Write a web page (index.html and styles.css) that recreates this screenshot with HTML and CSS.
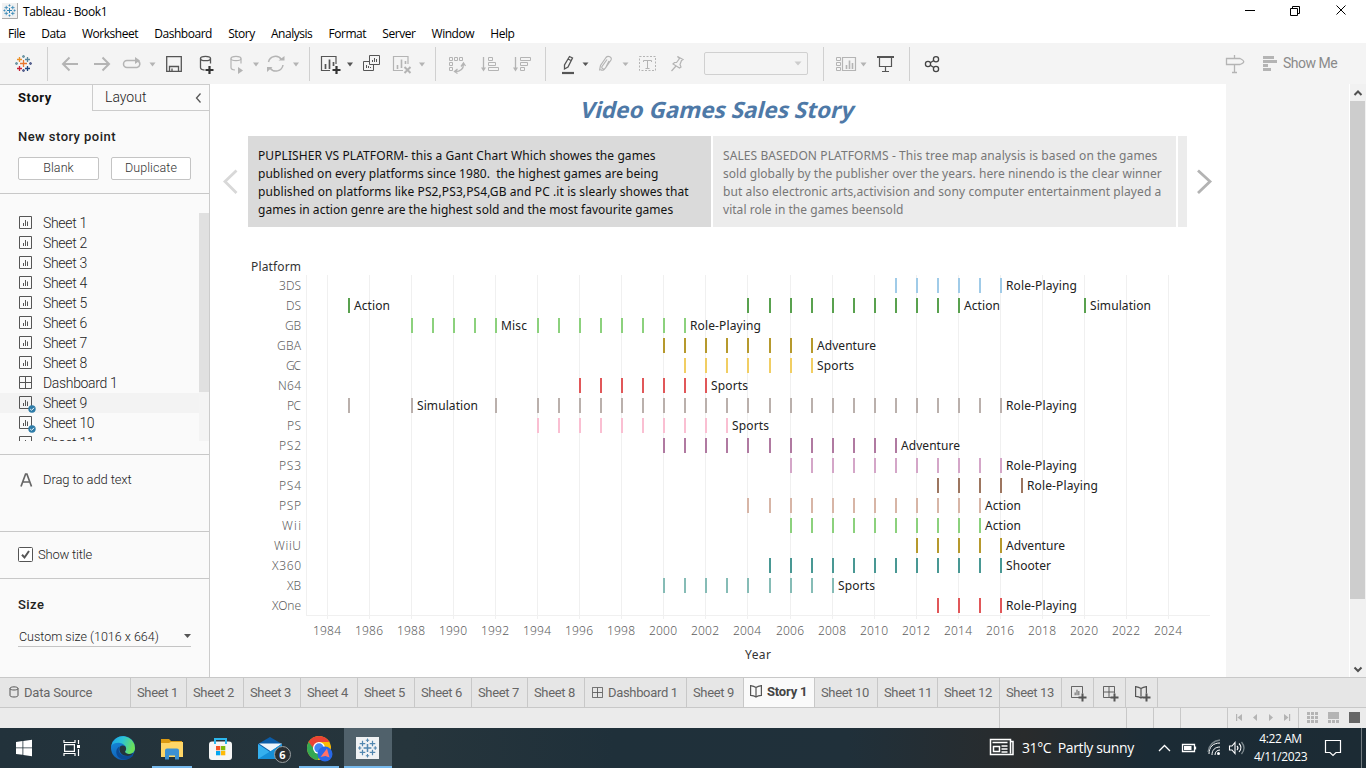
FILE: index.html
```html
<!DOCTYPE html>
<html lang="en">
<head>
<meta charset="utf-8">
<title>Tableau - Book1</title>
<link rel="stylesheet" href="styles.css">
</head>
<body>
<svg class="defs" width="0" height="0">
  <defs>
    <symbol id="sheet" viewBox="0 0 13 13"><path d="M.5.5h12v12H.5zM4.5 7v3M6.5 4v6M8.5 5.500v4.500" fill="none" stroke="#555"/></symbol>
    <symbol id="grid" viewBox="0 0 13 13"><path d="M.5.5h12v12H.5zM6.500 1v11M1 6.500h11" fill="none" stroke="#555"/></symbol>
    <symbol id="book" viewBox="0 0 12 13"><path d="M6 2.500C4.500 1.500 3 1 .600.6v9.800c2.400.2 4 .7 5.400 1.700 1.400-1 3-1.500 5.400-1.700V.6C9 1 7.500 1.500 6 2.500zM6 2.500v9" fill="none" stroke="#555" stroke-width="1.200"/></symbol>
    <symbol id="logo" viewBox="0 0 18 18"><path d="M9 5.500v7M5.500 9h7" stroke-width="1.400"/><path d="M4.500 2.500v5M2 5h5M13.500 2.500v5M11 5h5M4.500 10.500v5M2 13h5M13.500 10.500v5M11 13h5" stroke-width="1.100"/><path d="M9 .5v3M7.500 2h3M9 14.500v3M7.500 16h3M2 7.500v3M.5 9h3M16 7.500v3M14.500 9h3"/></symbol>
    <symbol id="ok" viewBox="0 0 8 8"><circle cx="4" cy="4" r="3.700" fill="#2e7ca8"/><path d="M2.200 4l1.300 1.300L6 2.800" fill="none" stroke="#fff"/></symbol>
  </defs>
</svg>
<div class="window">
  <header class="titlebar">
    <svg class="app-icon" width="16" height="16" viewBox="0 0 16 16"><path fill="#f1f1f1" d="M0 0h16v16H0z"/><path d="M15.500 0v15.500H0" fill="none" stroke="#aaa"/><use href="#logo" x="1" y="1" width="13" height="13" stroke="#2e83b4"/></svg>
    <span class="title">Tableau - Book1</span>
    <svg class="controls" width="130" height="22" viewBox="1236 0 130 22" fill="none" stroke="#000"><path d="M1245 10.500h10M1290.500 8.500h7v7h-7zM1292.500 8V6.500h7v7H1298M1336.500 5.500l9 9M1345.500 5.500l-9 9"/></svg>
  </header>
  <nav class="menu"><span>File</span><span>Data</span><span>Worksheet</span><span>Dashboard</span><span>Story</span><span>Analysis</span><span>Format</span><span>Server</span><span>Window</span><span>Help</span></nav>

  <div class="toolbar">
    <svg width="47" height="41" viewBox="0 43 47 41"><g stroke-width="1.300"><path stroke="#e8762d" d="M23.500 60v7M20 63.500h7"/><path stroke="#eb9129" d="M19.500 57v5M17 59.500h5"/><path stroke="#59879b" d="M27.500 57v5M25 59.500h5"/><path stroke="#c72035" d="M19.500 66v5M17 68.500h5"/><path stroke="#1f457e" d="M27.500 66v5M25 68.500h5"/><path stroke="#7199a6" d="M23.500 55v3M22 56.500h3M15 63.500h3M16.500 62v3"/><path stroke="#5c6692" d="M23.500 69v3M22 70.500h3M29 63.500h3M30.500 62v3"/></g></svg>
    <i class="rule"></i>
    <svg width="261" height="41" viewBox="48 43 261 41" fill="none" stroke="#b4b4b4">
      <path stroke-width="2" d="M63 64h15M69.500 57.500L63 64l6.500 6.500M94 64h15M102.500 57.500L109 64l-6.500 6.500"/>
      <path stroke-width="1.500" d="M132 60.500h-5a3.500 3.500 0 0 0 0 7h10a3.500 3.500 0 0 0 1-6.500M129 60.500h7"/><path fill="#b4b4b4" stroke="none" d="M135 57l5 3.500-5 3.500zM149.500 62.500h6l-3 4zM253 62.500h6l-3 4zM293 62.500h6l-3 4z"/>
      <g stroke="#555" stroke-width="1.300"><path d="M166.700 56.700h14.600v14.600h-14.600zM169.500 71v-4.500h9V71M172 71v-2.500"/><ellipse cx="205.500" cy="58.500" rx="5" ry="2.200"/><path d="M200.500 58.500v9c0 1.500 1.500 2.300 4 2.500M210.500 58.500v5"/><path d="M209.500 66v8M205.500 70h8" stroke-width="2.200" stroke="#333"/></g>
      <g stroke-width="1.200"><ellipse cx="236" cy="58.500" rx="5" ry="2.200"/><path d="M231 58.500v9c0 1.500 1.500 2.300 4 2.500M241 58.500v5"/><path d="M238 67l5 3.500-5 3.500z" fill="#b4b4b4" stroke="none"/></g>
      <path stroke-width="1.500" d="M268.500 62a7.200 7.200 0 0 1 13-2.500M283 65a7.200 7.200 0 0 1-13 3"/><path fill="#b4b4b4" stroke="none" d="M278.500 60.500h6V56zM267 72v-5h5.500z"/>
    </svg>
    <i class="rule"></i>
    <svg width="125" height="41" viewBox="310 43 125 41" fill="none" stroke="#555">
      <path stroke-width="1.200" d="M330 70.500h-8.500v-14h14.500V64"/><path d="M325.500 64v5M329.500 59.500V69M333.500 62v4" stroke-width="1.700"/><path d="M336.500 66v8M332.500 70h8" stroke-width="2.200" stroke="#333"/><path d="M347 62.500h6l-3 4z" fill="#555" stroke="none"/>
      <path d="M369.500 55.500h10v9h-10zM369 61.500h-5.500v9h10V65M372.500 60v2M374.500 58v4M376.500 59v3M366.500 65v3M368.500 66v2M370.500 67v1"/>
      <g stroke="#b4b4b4"><path d="M403 70.500h-9.500v-14H408V64" stroke-width="1.200"/><path d="M397.500 65v4M401.500 59.500V68M405.500 61v3" stroke-width="1.600"/><path d="M404.500 67l6 6M410.500 67l-6 6" stroke-width="2"/><path d="M419 62.500h6l-3 4z" fill="#b4b4b4" stroke="none"/></g>
    </svg>
    <i class="rule"></i>
    <svg width="109" height="41" viewBox="436 43 109 41" fill="none" stroke="#b4b4b4">
      <path d="M449.500 57.500h3v3h-3zM454.500 57.500h3v3h-3zM459.500 57.500h3v3h-3zM449.500 62.500h3v3h-3zM449.500 67.500h3v3h-3z"/><path d="M455 71.500c5.500 0 8.500-2 8.500-7.500M457.500 69l-3 2.500 3 2M461 66.500l2.500-3.500 2 3" stroke-width="1.300"/>
      <path d="M483.500 57v11.500M515.500 57v11.500" stroke-width="1.300"/><path d="M481 67.500h5l-2.500 4zM513 67.500h5l-2.500 4z" fill="#b4b4b4" stroke="none"/><path d="M488.500 57.500h4v3h-4zM488.500 62.500h7v3h-7zM488.500 67.500h10v3h-10zM520.500 57.500h10v3h-10zM520.500 62.500h7v3h-7zM520.500 67.500h4v3h-4z"/>
    </svg>
    <i class="rule"></i>
    <svg width="158" height="41" viewBox="546 43 158 41" fill="none" stroke="#b4b4b4">
      <g stroke="#555"><path d="M569.500 56.500l3 1.500-4.500 9-3.500 2v-4zM568 59l3 1.500" stroke-width="1.300"/><path d="M562 73h12" stroke-width="2.200"/></g><path d="M582.500 62.500h6l-3 3.500z" fill="#555" stroke="none"/>
      <path stroke-width="1.200" d="M599.500 70.500l1-5 5.500-8c2-2.300 6.500-.5 5 2.500l-5.500 8c-1.500 2-4.500.5-3.500-1.500l5-7M600.500 69.500c2 1.500 3.500.5 4.500-1l5-7M606 67l3-6"/><path d="M622.500 62.500h6l-3 3.500z" fill="#b4b4b4" stroke="none"/>
      <path d="M639.500 56.500h16v14h-16z" stroke-dasharray="2 1.500"/><path d="M643.500 62v-1.500h8V62M647.500 60.500v7.500M645.500 68.500h4"/>
      <path stroke-width="1.200" d="M677.500 56.500l5.500 3-1.500 1-1.500 4 1 2.500-1.500 1-6.500-4 1.500-1.500h2l3-4zM676 66l-4.500 5"/>
    </svg>
    <div class="combo"><svg width="8" height="5"><path d="M.5.5h7L4 4.500z" fill="#ccc"/></svg></div>
    <i class="rule gap-left"></i>
    <svg width="85" height="41" viewBox="824 43 85 41" fill="none" stroke="#b4b4b4">
      <path d="M836.500 57.500h4v3h-4zM836.500 62.500h4v3h-4zM836.500 67.500h4v3h-4z"/><path d="M842.500 57.500h13v13h-13z" stroke-width="1.200"/><path d="M846.500 65v4M849.500 60.500V69M852.500 63v6" stroke-width="1.600"/><path d="M860.500 62.500h6l-3 4z" fill="#b4b4b4" stroke="none"/>
      <g stroke="#555"><path d="M877 57h17" stroke-width="2"/><path d="M879.500 57v9.500h12V57M885.500 67v4M882 71.500h7" stroke-width="1.200"/></g>
    </svg>
    <i class="rule"></i>
    <svg width="40" height="41" viewBox="910 43 40 41" fill="none" stroke="#444" stroke-width="1.300"><circle cx="928" cy="64" r="2.600"/><circle cx="936" cy="59.200" r="2.600"/><circle cx="936" cy="69" r="2.600"/><path d="M930.300 62.700l3.500-2.200M930.300 65.300l3.500 2.200"/></svg>
    <svg class="push" width="59" height="41" viewBox="1221 43 59 41" fill="none" stroke="#b4b4b4" stroke-width="1.300"><path d="M1226.500 58.500h13.500c5 2.500 5 4 0 6h-13.500zM1234.500 55v3.500M1234.500 65v7M1232 72.500h5"/><path d="M1263 57.500h11M1263 61.500h14M1263 65.500h5M1263 69.500h8" stroke-width="3"/></svg>
    <span class="show-me">Show Me</span>
  </div>

  <main class="work">
    <aside class="side">
      <div class="side-tabs"><b>Story</b><div class="layout-tab"><span>Layout</span><svg width="7" height="10" viewBox="0 0 7 10"><path d="M5.500.5L1.500 5l4 4.500" fill="none" stroke="#555" stroke-width="1.300"/></svg></div></div>
      <section class="new-point"><h2>New story point</h2><div class="buttons"><button>Blank</button><button>Duplicate</button></div></section>
      <section class="sheets">
        <ul class="list">
          <li><svg><use href="#sheet"/></svg>Sheet 1</li><li><svg><use href="#sheet"/></svg>Sheet 2</li><li><svg><use href="#sheet"/></svg>Sheet 3</li><li><svg><use href="#sheet"/></svg>Sheet 4</li><li><svg><use href="#sheet"/></svg>Sheet 5</li><li><svg><use href="#sheet"/></svg>Sheet 6</li><li><svg><use href="#sheet"/></svg>Sheet 7</li><li><svg><use href="#sheet"/></svg>Sheet 8</li><li><svg><use href="#grid"/></svg>Dashboard 1</li>
          <li class="hover"><svg><use href="#sheet"/></svg><svg class="badge"><use href="#ok"/></svg>Sheet 9</li><li><svg><use href="#sheet"/></svg><svg class="badge"><use href="#ok"/></svg>Sheet 10</li><li><svg><use href="#sheet"/></svg>Sheet 11</li>
        </ul>
        <div class="list-scroll"><i></i></div>
      </section>
      <section class="drag"><svg width="13" height="14" viewBox="0 0 13 14"><path d="M1 13.500L5.600 1h1.300l4.600 12.500M3 9h6.500" fill="none" stroke="#666" stroke-width="1.700"/></svg><span>Drag to add text</span></section>
      <section class="show-title"><svg width="15" height="15" viewBox="0 0 15 15"><rect x=".5" y=".5" width="14" height="14" rx="1" fill="#fff" stroke="#555"/><path d="M4 7.800l2.500 2.700L11 4" fill="none" stroke="#555" stroke-width="2"/></svg><span>Show title</span></section>
      <section class="size"><h2>Size</h2><div class="select"><span>Custom size (1016 x 664)</span><svg width="7" height="4"><path d="M0 0h7L3.500 4z" fill="#555"/></svg></div></section>
    </aside>

    <article class="story">
      <h1>Video Games Sales Story</h1>
      <div class="navigator">
        <svg class="prev" width="38" height="91" viewBox="0 0 38 91"><path d="M26.500 34.500L15 45.500 26.500 57" fill="none" stroke="#d8d8d8" stroke-width="2.800"/></svg>
        <p class="point active"><span class="wide">PUPLISHER VS PLATFORM- this a Gant Chart Which showes the games</span>
<span>published on every platforms since 1980.  the highest games are being</span>
<span class="wide">published on platforms like PS2,PS3,PS4,GB and PC .it is slearly showes that</span>
<span>games in action genre are the highest sold and the most favourite games</span></p>
        <p class="point"><span class="wide">SALES BASEDON PLATFORMS - This tree map analysis is based on the games</span>
<span>sold globally by the publisher over the years. here ninendo is the clear winner</span>
<span class="wide">but also electronic arts,activision and sony computer entertainment played a</span>
<span>vital role in the games beensold</span></p>
        <p class="point sliver"></p>
        <svg class="next" width="39" height="91" viewBox="0 0 39 91"><path d="M11 34.500L23 45.500 11 57" fill="none" stroke="#b3b3b3" stroke-width="2.800"/></svg>
      </div>
      <svg class="chart" id="chart" width="1016" height="425" viewBox="210 252 1016 425"></svg>
    </article>
    <div class="empty"></div>
    <div class="scrollbar"><svg width="16" height="17" viewBox="0 0 16 17"><path d="M4.500 11L8 7.500l3.500 3.500" fill="none" stroke="#505050" stroke-width="2"/></svg><i></i><svg width="16" height="17" viewBox="0 0 16 17"><path d="M4.500 7.500L8 11l3.500-3.500" fill="none" stroke="#505050" stroke-width="2"/></svg></div>
  </main>

  <div class="sheet-tabs">
    <div class="source"><svg width="10" height="12" viewBox="0 0 10 12"><path d="M1 2.500C1 .3 9 .3 9 2.500v7c0 2-8 2-8 0zc0 2 8 2 8 0" fill="none" stroke="#555"/></svg>Data Source</div>
    <div>Sheet 1</div><div>Sheet 2</div><div>Sheet 3</div><div>Sheet 4</div><div>Sheet 5</div><div>Sheet 6</div><div>Sheet 7</div><div>Sheet 8</div>
    <div class="dash"><svg width="11" height="11"><use href="#grid"/></svg>Dashboard 1</div><div>Sheet 9</div>
    <div class="current"><svg width="12" height="13"><use href="#book"/></svg>Story 1</div>
    <div>Sheet 10</div><div>Sheet 11</div><div>Sheet 12</div><div>Sheet 13</div>
    <div class="add"><svg width="16" height="16"><use href="#sheet" width="12" height="12"/><path d="M8 11.500h8M11.500 7.500v8" stroke="#e6e6e6" stroke-width="4"/><path d="M7.500 11.500h8M11.500 7.500v8" stroke="#555" stroke-width="2"/></svg></div>
    <div class="add"><svg width="16" height="16"><use href="#grid" width="12" height="12"/><path d="M8 11.500h8M11.500 7.500v8" stroke="#e6e6e6" stroke-width="4"/><path d="M7.500 11.500h8M11.500 7.500v8" stroke="#555" stroke-width="2"/></svg></div>
    <div class="add"><svg width="16" height="16"><use href="#book" width="12" height="13"/><path d="M8 11.500h8M11.500 7.500v8" stroke="#e6e6e6" stroke-width="4"/><path d="M7.500 11.500h8M11.500 7.500v8" stroke="#555" stroke-width="2"/></svg></div>
    <div></div>
  </div>
  <div class="status"><i></i><i></i><i></i><i></i><i></i>
    <div><svg width="71" height="20" viewBox="1228 708 71 20" fill="#b4b4b4"><path d="M1236 714h1.200v7H1236zM1242 714v7l-4.500-3.500zM1257 714v7l-4-3.500zM1269 714v7l4-3.500zM1284 714v7l4.500-3.500zM1289 714h1.200v7H1289z"/></svg></div>
    <div><svg width="67" height="20" viewBox="1299 708 67 20" fill="#b4b4b4"><path d="M1307 712h3v3h-3zm4 0h3v3h-3zm4 0h3v3h-3zM1307 716h3v3h-3zm4 0h3v3h-3zm4 0h3v3h-3zM1307 720h3v3h-3zm4 0h3v3h-3zm4 0h3v3h-3zM1328 712h11v7h-11zM1328 720h3v3h-3zm4 0h3v3h-3zm4 0h3v3h-3z"/><path fill="#666" d="M1349 712h11v11h-11z"/></svg></div>
  </div>

  <footer class="taskbar">
    <svg width="48" height="40" viewBox="0 728 48 40" fill="#fff"><path d="M16 742l6.500-.9v6.400H16zM23.300 741l8.700-1.200v7.700h-8.700zM16 748.300h6.500v6.500L16 754zM23.300 748.300H32v7.900l-8.700-1.200z"/></svg>
    <svg width="51" height="40" viewBox="48 728 51 40" fill="none" stroke="#fff" stroke-width="1.200"><path d="M64 740v2.500h11V740M64.600 744.600h9.800v6.800h-9.800zM64 756v-2.500h11v2.500M78.500 740v4M78.500 749v7"/><path fill="#fff" stroke="none" d="M77 745h3v3h-3z"/></svg>
    <svg width="53" height="40" viewBox="99 728 53 40"><defs><linearGradient id="e1" x1="0" y1="0" x2="1" y2=".3"><stop stop-color="#1aa4ea"/><stop offset=".5" stop-color="#2cc3d5"/><stop offset="1" stop-color="#6be05a"/></linearGradient><linearGradient id="e2" x1="0" y1="0" x2=".5" y2="1"><stop stop-color="#1793e0"/><stop offset="1" stop-color="#0f5cb5"/></linearGradient></defs><circle cx="123" cy="748" r="12" fill="url(#e2)"/><path fill="url(#e1)" d="M111.200 746a12 12 0 0 1 23.800 2c0 5-4.500 7-8.500 5.500-2-.8-1.800-1.800-.7-3 1-1.500.5-6.500-5.800-7.500-4-.6-7 .8-8.800 3z"/><path fill="#0c4a94" d="M119.500 746.500c-3 6 3 12 12.500 8.500 1.200-.4 1.500.2.800 1-6 6.500-17 3.500-16.500-4.500.1-2 1.200-4 3.200-5z"/><path fill="#24343c" d="M119.800 747c1.500-2.500 6.500-2 6.300 2-.1 1.500-1.800 2.200-.5 3.800 1.700 1.800 5.500 1.400 8 .2-2 3-6 3.500-9 2.500-4-1-6-5-4.800-8.500z"/></svg>
    <div class="app open"><svg width="40" height="40" viewBox="152 728 40 40"><path d="M161 739h8l2 2h11v6h-21z" fill="#dc9a12"/><path d="M161 743h8l2-1h12v15h-22z" fill="#ffd667"/><path d="M165 750.500q0-2 2-2h10q2 0 2 2v9h-4v-4h-6v4h-4z" fill="#3c91d4"/></svg></div>
    <svg width="56" height="40" viewBox="192 728 56 40"><path d="M215 744v-5h11v5" fill="none" stroke="#2db8ee" stroke-width="2"/><rect x="209" y="741.500" width="23" height="18.500" rx="3" fill="#f6f6f6"/><path d="M215 741v3M226 741v3" stroke="#2db8ee" stroke-width="2"/><path fill="#f35325" d="M216 746h4.300v4.300H216z"/><path fill="#81bc06" d="M221 746h4.300v4.300H221z"/><path fill="#05a6f0" d="M216 751h4.300v4.300H216z"/><path fill="#ffba08" d="M221 751h4.300v4.300H221z"/></svg>
    <div class="mail"><svg width="51" height="40" viewBox="248 728 51 40"><path d="M258 744l12-7 12 7v15h-24z" fill="#0b5ca8"/><path d="M259 743.500h23l-11 8z" fill="#eef4fb"/><path d="M258 744l12 8 12-8v15h-24z" fill="#35b0ef"/><path d="M258 759h24v-15z" fill="#168fd8"/></svg><span>6</span></div>
    <div class="app open"><svg width="40" height="40" viewBox="299 728 40 40"><circle cx="319" cy="748" r="12" fill="#fbbc05"/><path d="M308.600 742a12 12 0 0 1 20.800 0H319l-5 9z" fill="#ea4335"/><path d="M308.600 742a12 12 0 0 0 9 18l6-10-8 1z" fill="#34a853"/><circle cx="319" cy="748" r="6" fill="#fff"/><circle cx="319" cy="748" r="4.700" fill="#4285f4"/><circle cx="325" cy="754" r="7.500" fill="#2868e8"/><path d="M327 748.500l2.500 9-4-1.500-5 1z" fill="#ff7167"/></svg></div>
    <div class="app open selected"><svg width="48" height="40" viewBox="344 728 48 40"><path fill="#f0f2f4" d="M356 737h23v22h-23z"/><use href="#logo" x="357.500" y="738" width="20" height="20" stroke="#5287b0"/></svg></div>
    <svg class="push" width="36" height="40" viewBox="986 728 36 40" fill="none" stroke="#fff" stroke-width="1.500"><path d="M1010 741.500h3v13h-22.500v-15h20v14M992.500 742.500h15M993.500 746.500h6v5h-6zM1001.500 746h6M1001.500 749h6M1001.500 752h6"/></svg>
    <span class="weather">31°C&nbsp; Partly sunny</span>
    <svg width="99" height="40" viewBox="1152 728 99 40" fill="none" stroke="#fff" stroke-width="1.300"><path d="M1159 751l5.500-5.500 5.500 5.500M1182.500 744.500h12v7h-12zM1195.500 746.500v3"/><path fill="#fff" stroke="none" d="M1184 746h7.500v4H1184z"/><path d="M1209 754c0-7 4-11 11-11M1212 755c0-5 3-8 8-8M1215 755c0-3 2-5 5-5" stroke-width="1"/><path d="M1208 752c1-7 5-11 12-12" stroke="#79858a"/><circle cx="1218.500" cy="753.500" r="1.500" fill="#fff" stroke="none"/><path d="M1229.500 746h2.500l3-3.500v11l-3-3.500h-2.500zM1237 746q2 2 0 4M1239 743.500q4 4 0 8.500" stroke-width="1.100"/><path d="M1241.500 742q5 6 0 12" stroke="#7d898e"/></svg>
    <div class="clock"><span>4:22 AM</span><span>4/11/2023</span></div>
    <svg width="56" height="40" viewBox="1310 728 56 40" fill="none" stroke="#fff" stroke-width="1.200"><path d="M1325.500 740.500h15v12h-4.500l-3 3-3-3h-4.500z"/><path d="M1361.500 728v40" stroke="#727b80" stroke-width="1"/></svg>
  </footer>
</div>
<script src="chart.js"></script>
</body>
</html>
```
FILE: styles.css
```css
* { box-sizing: border-box; }
body { margin: 0; font-family: Roboto, "Liberation Sans", sans-serif; font-size: 13px; font-weight: 300; color: #222; overflow: hidden; }
h1, h2, p, ul { margin: 0; padding: 0; }
svg { display: block; flex: none; }
.defs { position: absolute; }
.window { width: 1366px; height: 768px; display: flex; flex-direction: column; background: #fff; }
.titlebar { height: 22px; display: flex; padding-left: 2px; font: 12px/22px "Open Sans", "Noto Sans", sans-serif; color: #000; }
.app-icon { margin-top: 3px; }
.title { padding-left: 5px; letter-spacing: -.38px; line-height: 24px; }
.controls { margin-left: auto; }
.menu { height: 21px; display: flex; gap: 16.200px; padding-left: 8px; font: 12px/23px "Open Sans", "Noto Sans", sans-serif; letter-spacing: -.47px; color: #000; }
.toolbar { height: 41px; flex: none; display: flex; background: #f4f4f4; }
.rule { width: 1px; height: 34px; margin-top: 4px; background: #d0d0d0; flex: none; }
.gap-left { margin-left: 15px; }
.combo { width: 104px; height: 23px; margin-top: 9px; border: 1px solid #d0d0d0; border-radius: 2px; display: flex; align-items: center; justify-content: flex-end; padding-right: 5px; }
.push { margin-left: auto; }
.show-me { width: 86px; padding-left: 3px; line-height: 41px; font-size: 14px; font-weight: 400; letter-spacing: -.5px; color: #8a8a8a; }

.work { height: 593px; flex: none; display: flex; }
.side { width: 210px; flex: none; background: #fafafa; border-right: 1px solid #ccc; border-top: 1px solid #ccc; display: flex; flex-direction: column; }
.side section { border-bottom: 1px solid #c8c8c8; }
.side h2 { font-size: 13px; font-weight: 500; line-height: 18px; letter-spacing: .45px; color: #222; }
.side-tabs { height: 26px; flex: none; display: flex; font-size: 14px; line-height: 25px; }
.side-tabs b { width: 92px; padding-left: 18px; font-weight: 700; font-size: 13px; letter-spacing: .6px; color: #111; }
.layout-tab { flex: 1; display: flex; justify-content: space-between; align-items: center; border-left: 1px solid #ccc; border-bottom: 1px solid #ccc; padding: 0 7px 0 12px; }
.new-point { height: 83px; padding: 17px 18px 0; }
.buttons { display: flex; gap: 12px; margin-top: 11px; }
.buttons button { width: 81px; height: 23px; padding: 0 0 2px; border: 1px solid #c4c4c4; border-radius: 2px; background: #fff; font: inherit; font-size: 12.500px; color: #333; letter-spacing: .1px; }
.buttons button:last-child { width: 80px; }
.sheets { height: 261px; padding: 19px 0 13px; display: flex; }
.list { list-style: none; flex: 1; overflow: hidden; }
.list li { position: relative; display: flex; align-items: center; height: 20px; padding-left: 19px; font-size: 14px; letter-spacing: -.33px; }
.list svg { width: 13px; height: 13px; margin: -1px 11px 0 0; }
.list .badge { position: absolute; left: 28px; top: 12px; width: 8px; height: 8px; margin: 0; }
.list .hover { background: #f3f3f3; }
.list-scroll { width: 10px; background: #f4f4f4; }
.list-scroll i { display: block; height: 179px; background: #e0e0e0; }
.drag { height: 77px; padding: 18px 0 0 20px; display: flex; gap: 10px; line-height: 14px; letter-spacing: -.12px; }
.show-title { height: 47px; padding: 0 18px 1px; display: flex; align-items: center; gap: 5px; letter-spacing: -.2px; }
.side .size { border: 0; padding: 17px 18px 0; }
.select { height: 21px; margin-top: 12px; border-bottom: 1px solid #c4c4c4; display: flex; justify-content: space-between; align-items: center; padding-left: 1px; font-size: 12.500px; }

.story { width: 1016px; flex: none; }
.story h1 { height: 52px; font: 700 22.500px/51px "Noto Sans", sans-serif; letter-spacing: 0; color: #4e79a7; text-align: center; transform: skewX(-14deg); }
.navigator { display: flex; height: 91px; }
.point { width: 463px; height: 91px; margin-right: 2px; background: #ececec; padding: 11px 10px; white-space: pre; font: 12px/18px "Noto Sans", sans-serif; letter-spacing: .03px; color: #777; }
.point .wide { letter-spacing: .09px; }
.point.active { background: #dadada; color: #111; }
.point.sliver { width: 9px; margin: 0; padding: 0; }
.chart { margin-top: 25px; font: 12px "Noto Sans", sans-serif; }
.chart .gridline { stroke: #f0f0f0; }
.chart .value { fill: #222; }
.chart .header { fill: #5c5c5c; font-weight: 300; }
.chart .heading { fill: #333; }
.empty { flex: 1; background: #f4f4f4; border-right: 1px solid #fff; }
.scrollbar { width: 16px; background: #f1f1f1; display: flex; flex-direction: column; }
.scrollbar i { height: 498px; width: 15px; background: #cdcdcd; margin-bottom: auto; }

.sheet-tabs { height: 31px; flex: none; display: grid; grid-template-columns: 131px 56px repeat(4, 57px) 57px 56px 57px 102px 57px 71px 63px 60px 62px 62px 32px 32px 32px 1fr; background: #e6e6e6; border: solid #c8c8c8; border-width: 1px 0; color: #666; font-size: 13px; font-weight: 400; letter-spacing: -.36px; }
.sheet-tabs div { border-right: 1px solid #c8c8c8; display: flex; align-items: center; padding-left: 6px; gap: 5px; white-space: nowrap; overflow: hidden; }
.sheet-tabs div:last-child { border: 0; }
.sheet-tabs .source { padding-left: 9px; letter-spacing: -.2px; }
.sheet-tabs .source svg { margin-top: -2px; }
.sheet-tabs .dash { padding-left: 7px; letter-spacing: -.33px; }
.sheet-tabs .current { background: #fafafa; font-weight: 700; padding-bottom: 2px; color: #444; letter-spacing: -.2px; }
.sheet-tabs .add { padding: 3px 0 0 9px; }
.status { height: 20px; flex: none; display: grid; grid-template-columns: 1000px 127px 27px 27px 47px 71px 67px; background: #ebebeb; }
.status i { border-right: 1px solid #c8c8c8; }
.status div:nth-of-type(1) { border-right: 1px solid #c8c8c8; overflow: hidden; }

.taskbar { height: 40px; display: flex; background: linear-gradient(90deg, #22323b 0, #26353c 30%, #1f303a 45%, #20303a 62%, #292b2c 75%, #1b2b35 84%, #1c2b34 100%); color: #fff; font-family: "Open Sans", "Noto Sans", sans-serif; font-weight: 400; }
.app { width: 40px; height: 40px; box-shadow: inset 0 -2px #76b9ed; }
.app.selected { width: 48px; margin-left: 5px; background: #50616b; }
.mail { position: relative; width: 51px; }
.mail span { position: absolute; left: 26px; top: 18px; width: 17px; height: 17px; border: 1px solid #9a9fa2; border-radius: 50%; background: #2a2f32; font-size: 11px; font-weight: 700; line-height: 15px; text-align: center; }
.weather { width: 130px; white-space: nowrap; font-size: 14px; line-height: 40px; letter-spacing: -.38px; }
.clock { width: 59px; display: flex; flex-direction: column; align-items: center; font-size: 12px; line-height: 18px; padding-top: 2px; letter-spacing: -.4px; }
```
FILE: chart.js
```javascript
const svg = document.getElementById('chart');
const xOf = year => Math.round(326.99 + (year - 1984) * 21.025);
// Each row: platform, colour, year ranges, and labels by year.
const rows = [
  ['3DS', '#a0cbe8', [[2011, 2016]], { 2016: 'Role-Playing' }],
  ['DS', '#59a14f', [[1985, 1985], [2004, 2014], [2020, 2020]], { 1985: 'Action', 2014: 'Action', 2020: 'Simulation' }],
  ['GB', '#8cd17d', [[1988, 1992], [1994, 2001]], { 1992: 'Misc', 2001: 'Role-Playing' }],
  ['GBA', '#b6992d', [[2000, 2007]], { 2007: 'Adventure' }],
  ['GC', '#f1ce63', [[2001, 2007]], { 2007: 'Sports' }],
  ['N64', '#e15759', [[1996, 2002]], { 2002: 'Sports' }],
  ['PC', '#bab0ac', [[1985, 1985], [1988, 1988], [1992, 1992], [1994, 2016]], { 1988: 'Simulation', 2016: 'Role-Playing' }],
  ['PS', '#fabfd2', [[1994, 2003]], { 2003: 'Sports' }],
  ['PS2', '#b07aa1', [[2000, 2011]], { 2011: 'Adventure' }],
  ['PS3', '#d4a6c8', [[2006, 2016]], { 2016: 'Role-Playing' }],
  ['PS4', '#9d7660', [[2013, 2017]], { 2017: 'Role-Playing' }],
  ['PSP', '#d7b5a6', [[2004, 2015]], { 2015: 'Action' }],
  ['Wii', '#8cd17d', [[2006, 2015]], { 2015: 'Action' }],
  ['WiiU', '#b6992d', [[2012, 2016]], { 2016: 'Adventure' }],
  ['X360', '#499894', [[2005, 2016]], { 2016: 'Shooter' }],
  ['XB', '#86bcb6', [[2000, 2008]], { 2008: 'Sports' }],
  ['XOne', '#e15759', [[2013, 2016]], { 2016: 'Role-Playing' }]
];
const widths = { 'Role-Playing': 71, Action: 36, Simulation: 61, Misc: 26, Adventure: 59, Sports: 37, Shooter: 45,
  '3DS': 22, DS: 15, GB: 16, GBA: 24, GC: 15, N64: 23, PC: 14, PS: 14, PS2: 22, PS3: 22, PS4: 22, PSP: 22, Wii: 19, WiiU: 27, X360: 29, XB: 14, XOne: 29 };
let out = '<text class="heading" x="251" y="271" textLength="50">Platform</text><path class="gridline" d="M306.5 275v340"/><path class="gridline" d="M306 615.5h904"/>';
for (let year = 1984; year <= 2024; year += 2) {
  const x = xOf(year);
  out += `<path class="gridline" d="M${x + .5} 275v344"/><text class="header" x="${x - 14}" y="635" textLength="28">${year}</text>`;
}
rows.forEach(([name, color, ranges, labels], i) => {
  const y = 278 + i * 20;
  out += `<text class="header" x="${301 - widths[name]}" y="${y + 12}" textLength="${widths[name]}">${name}</text>`;
  ranges.forEach(([from, to]) => {
    for (let year = from; year <= to; year++) {
      const x = xOf(year);
      out += `<rect x="${x}" y="${y}" width="2" height="15" fill="${color}"/>`;
      if (labels[year]) out += `<text class="value" x="${x + 6}" y="${y + 12}" textLength="${widths[labels[year]]}">${labels[year]}</text>`;
    }
  });
});
out += '<text class="heading" x="745" y="659" textLength="26">Year</text>';
svg.innerHTML = out;
```
